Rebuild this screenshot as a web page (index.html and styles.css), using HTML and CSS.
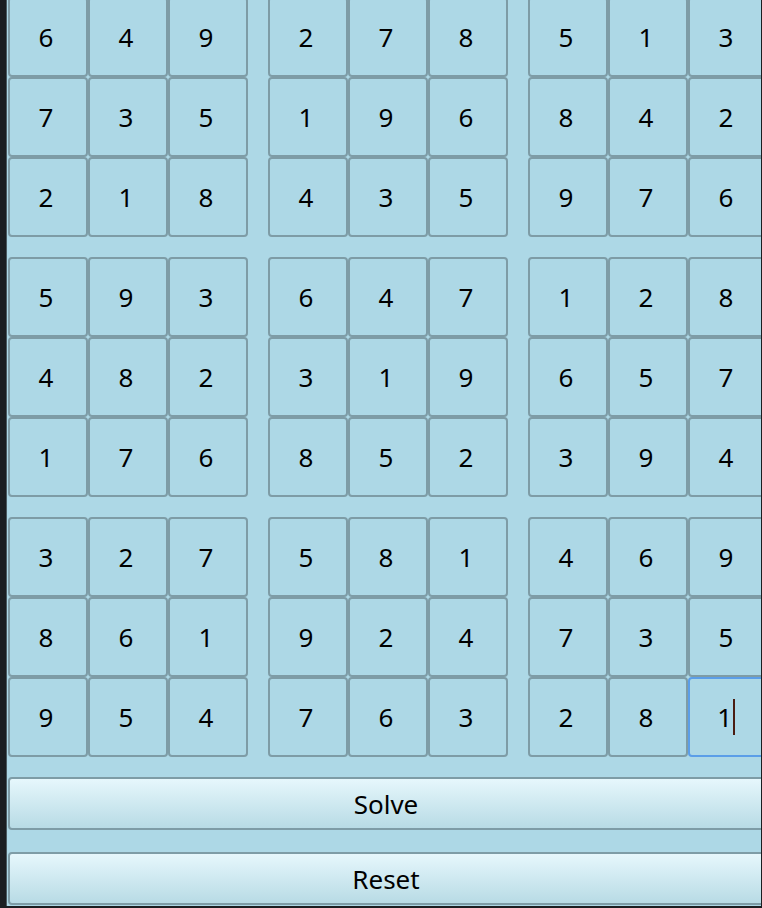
FILE: index.html
```html
<!DOCTYPE html>
<html>
<head>
<meta charset="utf-8">
<link rel="stylesheet" href="styles.css">
</head>
<body>
<div class="panel">
  <div class="board">
    <div class="block"><div class="cell">6</div><div class="cell">4</div><div class="cell">9</div><div class="cell">7</div><div class="cell">3</div><div class="cell">5</div><div class="cell">2</div><div class="cell">1</div><div class="cell">8</div></div>
    <div class="block"><div class="cell">2</div><div class="cell">7</div><div class="cell">8</div><div class="cell">1</div><div class="cell">9</div><div class="cell">6</div><div class="cell">4</div><div class="cell">3</div><div class="cell">5</div></div>
    <div class="block"><div class="cell">5</div><div class="cell">1</div><div class="cell">3</div><div class="cell">8</div><div class="cell">4</div><div class="cell">2</div><div class="cell">9</div><div class="cell">7</div><div class="cell">6</div></div>
    <div class="block"><div class="cell">5</div><div class="cell">9</div><div class="cell">3</div><div class="cell">4</div><div class="cell">8</div><div class="cell">2</div><div class="cell">1</div><div class="cell">7</div><div class="cell">6</div></div>
    <div class="block"><div class="cell">6</div><div class="cell">4</div><div class="cell">7</div><div class="cell">3</div><div class="cell">1</div><div class="cell">9</div><div class="cell">8</div><div class="cell">5</div><div class="cell">2</div></div>
    <div class="block"><div class="cell">1</div><div class="cell">2</div><div class="cell">8</div><div class="cell">6</div><div class="cell">5</div><div class="cell">7</div><div class="cell">3</div><div class="cell">9</div><div class="cell">4</div></div>
    <div class="block"><div class="cell">3</div><div class="cell">2</div><div class="cell">7</div><div class="cell">8</div><div class="cell">6</div><div class="cell">1</div><div class="cell">9</div><div class="cell">5</div><div class="cell">4</div></div>
    <div class="block"><div class="cell">5</div><div class="cell">8</div><div class="cell">1</div><div class="cell">9</div><div class="cell">2</div><div class="cell">4</div><div class="cell">7</div><div class="cell">6</div><div class="cell">3</div></div>
    <div class="block"><div class="cell">4</div><div class="cell">6</div><div class="cell">9</div><div class="cell">7</div><div class="cell">3</div><div class="cell">5</div><div class="cell">2</div><div class="cell">8</div><div class="cell focused">1<span class="caret"></span></div></div>
  </div>
  <button class="btn solve">Solve</button>
  <button class="btn reset">Reset</button>
</div>
</body>
</html>
```
FILE: styles.css
```css
html, body {
  margin: 0;
  padding: 0;
  overflow: hidden;
  width: 762px;
  height: 908px;
  background: #1b1e21;
}
body {
  display: flex;
  font-family: "Noto Sans", "Open Sans", sans-serif;
}
.panel {
  margin-left: 6px;
  border-left: 1px solid #4a5a60;
  width: 755px;
  height: 906px;
  background: #add8e6;
  overflow: hidden;
  padding-left: 1px;
  box-sizing: border-box;
}
.board {
  margin-top: -3px;
  width: 760px;
  display: grid;
  grid-template-columns: repeat(3, 240px);
  grid-auto-rows: 240px;
  gap: 20px;
}
.block {
  display: grid;
  grid-template-columns: repeat(3, 80px);
  grid-auto-rows: 80px;
}
.cell {
  box-sizing: border-box;
  border: 2px solid #7e9ca6;
  border-radius: 4px;
  display: flex;
  align-items: center;
  justify-content: center;
  padding-right: 4px;
  font-size: 26px;
  color: #000;
}
.cell.focused {
  border-color: #5b9ee8;
}
.caret {
  display: inline-block;
  width: 1.5px;
  height: 36px;
  background: #4a1c12;
  margin-left: 1px;
}
.btn {
  display: block;
  box-sizing: border-box;
  width: 760px;
  height: 53px;
  border: 2px solid #7e9ca6;
  border-radius: 4px;
  background: linear-gradient(#e6f7fc, #b8dbe5);
  font-family: "Noto Sans", "Open Sans", sans-serif;
  font-size: 26px;
  color: #000;
  padding: 0 4px 0 0;
}
.solve {
  margin-top: 20px;
}
.reset {
  margin-top: 22px;
}
```
